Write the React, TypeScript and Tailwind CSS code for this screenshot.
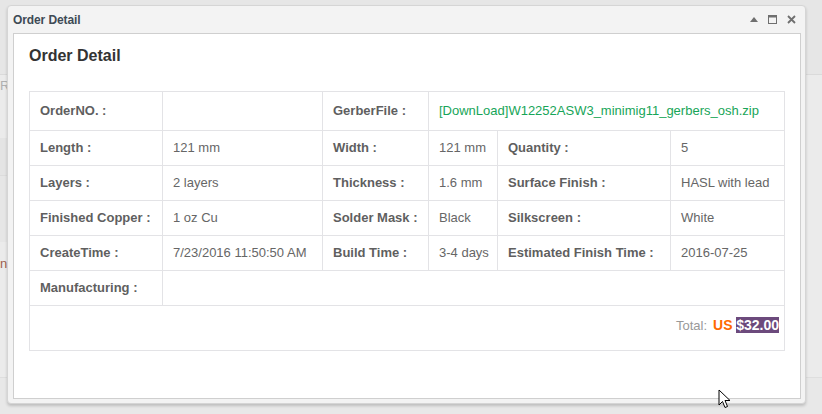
import React from "react";

type Cell = { text?: string; label?: boolean; span?: number; link?: boolean };

const rows: { h: string; cells: Cell[] }[] = [
  {
    h: "h-[39px]",
    cells: [
      { text: "OrderNO. :", label: true },
      { text: "" },
      { text: "GerberFile :", label: true },
      { text: "[DownLoad]W12252ASW3_minimig11_gerbers_osh.zip", link: true, span: 3 },
    ],
  },
  {
    h: "h-[35px]",
    cells: [
      { text: "Length :", label: true },
      { text: "121 mm" },
      { text: "Width :", label: true },
      { text: "121 mm" },
      { text: "Quantity :", label: true },
      { text: "5" },
    ],
  },
  {
    h: "h-[35px]",
    cells: [
      { text: "Layers :", label: true },
      { text: "2 layers" },
      { text: "Thickness :", label: true },
      { text: "1.6 mm" },
      { text: "Surface Finish :", label: true },
      { text: "HASL with lead" },
    ],
  },
  {
    h: "h-[35px]",
    cells: [
      { text: "Finished Copper :", label: true },
      { text: "1 oz Cu" },
      { text: "Solder Mask :", label: true },
      { text: "Black" },
      { text: "Silkscreen :", label: true },
      { text: "White" },
    ],
  },
  {
    h: "h-[35px]",
    cells: [
      { text: "CreateTime :", label: true },
      { text: "7/23/2016 11:50:50 AM" },
      { text: "Build Time :", label: true },
      { text: "3-4 days" },
      { text: "Estimated Finish Time :", label: true },
      { text: "2016-07-25" },
    ],
  },
  {
    h: "h-[35px]",
    cells: [
      { text: "Manufacturing :", label: true },
      { text: "", span: 5 },
    ],
  },
];

function TitleIcons() {
  return (
    <div className="flex items-center gap-[10px] pr-[9px] text-[#6f6f6f]">
      <svg width="8" height="5" viewBox="0 0 8 5">
        <polygon points="0,5 4,0 8,5" fill="currentColor" />
      </svg>
      <svg width="9" height="9" viewBox="0 0 9 9">
        <rect x="0.5" y="0.5" width="8" height="8" fill="none" stroke="currentColor" />
        <rect x="0" y="0" width="9" height="2.5" fill="currentColor" />
      </svg>
      <svg width="9" height="9" viewBox="0 0 9 9">
        <path d="M1 1 L8 8 M8 1 L1 8" stroke="currentColor" strokeWidth="1.8" />
      </svg>
    </div>
  );
}

export default function App() {
  return (
    <div className="relative w-[822px] h-[414px] overflow-hidden bg-[#ebebeb] font-['Liberation_Sans',Arial,sans-serif]">
      {/* page behind the dialog */}
      <div className="flex flex-col">
        <div className="h-[75px] bg-[#e6e6e6] border-b border-[#dadada]" />
        <div className="h-[63px] bg-[#ebebeb] pt-[3px] text-[13px] text-[#b0b0b0] leading-4">R</div>
        <div className="h-[37px] bg-[#e4e4e4] w-[20px]" />
        <div className="h-[67px] bg-[#e6e6e6] border-t border-[#dcdcdc] w-[20px]" />
        <div className="h-[135px] bg-[#ebebeb] pt-[14px] text-[13px] text-[#a0614e] leading-4">n</div>
        <div className="h-[40px] bg-[#e8e8e8] border-t border-[#dedede]" />
      </div>

      {/* dialog */}
      <div className="absolute left-[7px] top-[5px] w-[799px] h-[399px] flex flex-col rounded-[4px] border border-[#d5d5d5] bg-[#f3f3f3] shadow-[0_2px_3px_rgba(0,0,0,0.18)]">
        <div className="h-[27px] flex items-center justify-between pl-[5px]">
          <span className="text-[12px] font-bold text-[#3e4a55] tracking-[-0.1px]">Order Detail</span>
          <TitleIcons />
        </div>
        <div className="ml-[5px] mr-[4px] h-[366px] border border-[#cfcfcf] bg-white pl-[15px] pt-[12px]">
          <h2 className="text-[16px] leading-5 font-bold text-[#333]">Order Detail</h2>
          <table className="mt-[25px] table-fixed border-collapse w-[755px] text-[13px] text-[#666]">
            <colgroup>
              <col className="w-[133px]" />
              <col className="w-[160px]" />
              <col className="w-[106px]" />
              <col className="w-[69px]" />
              <col className="w-[173px]" />
              <col className="w-[114px]" />
            </colgroup>
            <tbody>
              {rows.map((r, i) => (
                <tr key={i} className={r.h}>
                  {r.cells.map((c, j) => (
                    <td
                      key={j}
                      colSpan={c.span}
                      className={`border border-[#e3e3e6] pl-[10px] pr-[4px] align-middle whitespace-nowrap ${
                        c.label ? "font-bold text-[#5f5f5f]" : ""
                      } ${c.link ? "text-[#17a558]" : ""}`}
                    >
                      {c.text}
                    </td>
                  ))}
                </tr>
              ))}
              <tr className="h-[45px]">
                <td colSpan={6} className="border border-[#e3e3e6] align-top pt-[9px] pr-[5px] text-right">
                  <span className="text-[13px] text-[#999]">Total:</span>
                  <span className="ml-[6px] text-[14px] font-bold text-[#ff6a00]">US</span>{" "}
                  <span className="text-[14px] font-bold text-white bg-[#6c4a7c]">$32.00</span>
                </td>
              </tr>
            </tbody>
          </table>
        </div>
      </div>

      {/* mouse pointer */}
      <svg className="absolute left-[718px] top-[389px]" width="13" height="20" viewBox="0 0 13 20">
        <path d="M1 1 L1 16 L4.5 12.5 L7 18.5 L9.5 17.5 L7 11.5 L12 11.5 Z" fill="white" stroke="black" strokeWidth="1" strokeLinejoin="round" />
      </svg>
    </div>
  );
}
